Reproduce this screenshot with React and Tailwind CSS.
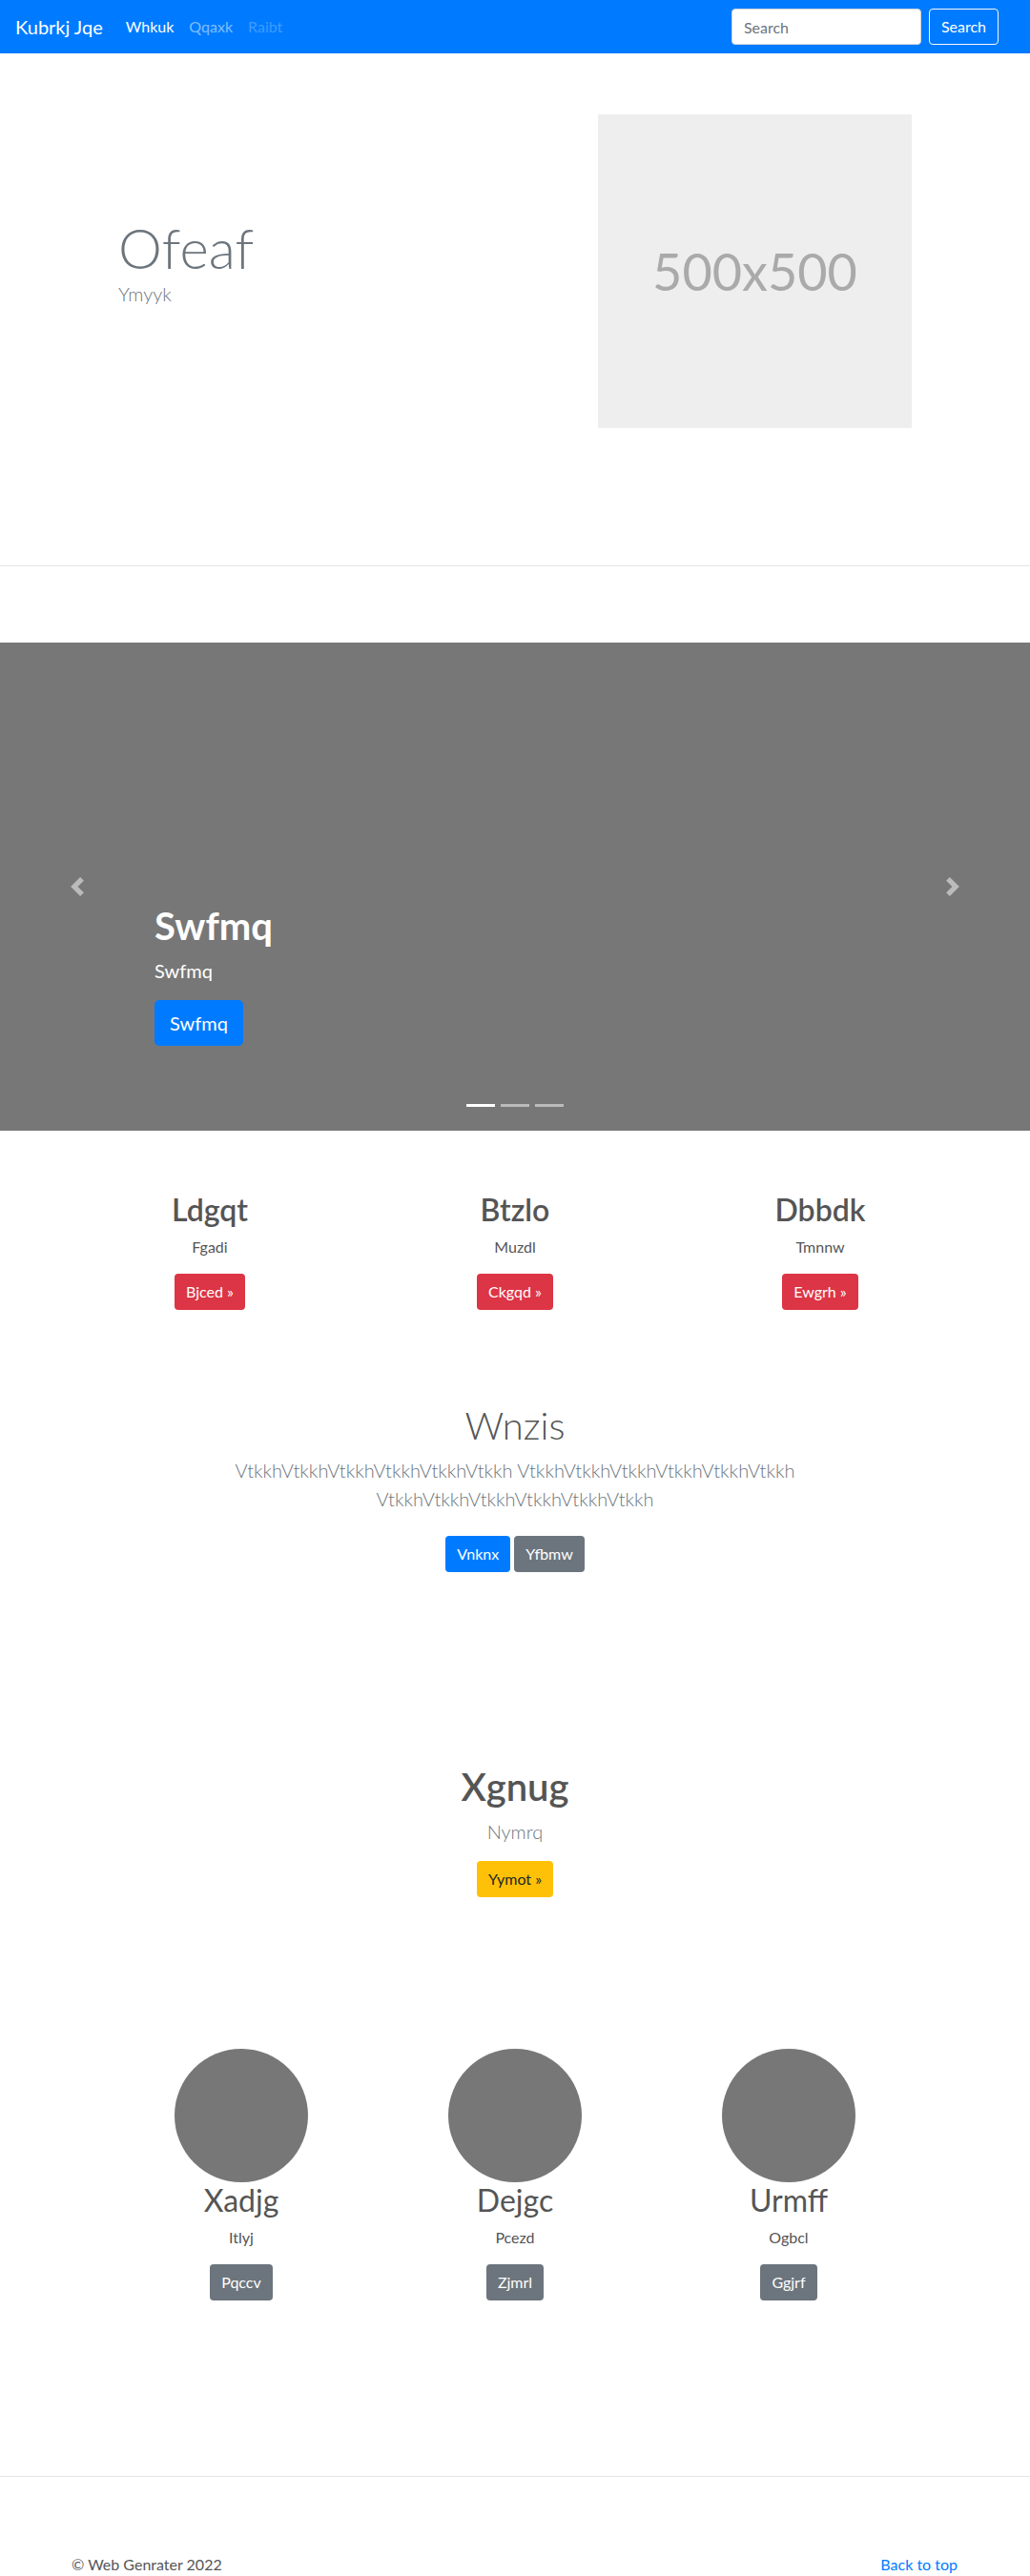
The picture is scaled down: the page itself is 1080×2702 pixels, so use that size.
import React from "react";

const F = "font-['Lato','Noto_Sans',sans-serif]";

function Btn({ className = "", children }) {
  return (
    <a
      className={
        "inline-flex items-center justify-center h-[38px] px-3 rounded-[4px] text-[16px] leading-[24px] " +
        className
      }
    >
      {children}
    </a>
  );
}

export default function App() {
  const vt = "VtkkhVtkkhVtkkhVtkkhVtkkhVtkkh";
  return (
    <div className={"w-[1080px] min-h-[2702px] bg-white text-[#555555] " + F}>
      {/* Navbar */}
      <nav className="h-[56px] bg-[#007bff] flex items-center pl-4 pr-[33px]">
        <span className="text-white text-[20px] leading-[30px] mr-4">Kubrkj Jqe</span>
        <a className="px-2 text-white text-[16px]">Whkuk</a>
        <a className="px-2 text-white/50 text-[16px]">Qqaxk</a>
        <a className="px-2 text-white/25 text-[16px]">Raibt</a>
        <div className="ml-auto flex items-center">
          <input
            placeholder="Search"
            className="w-[199px] h-[38px] rounded-[4px] border border-[#ced4da] bg-white px-3 text-[16px] text-[#495057] placeholder:text-[#6c757d] mr-2 outline-none"
          />
          <button className="h-[38px] px-3 rounded-[4px] border border-[#f8f9fa] text-white text-[16px]">
            Search
          </button>
        </div>
      </nav>

      {/* Hero */}
      <section className="flex h-[537px] pt-[64px]">
        <div className="w-[627px] h-[329px] pl-[124px] flex flex-col justify-center">
          <h1 className="text-[58px] font-light leading-none text-[#6c757d] mb-1">Ofeaf</h1>
          <p className="text-[20px] font-light leading-[30px] text-[#6c757d] mb-4">Ymyyk</p>
        </div>
        <div className="w-[329px] h-[329px] bg-[#eeeeee] flex items-center justify-center text-[#aaaaaa] text-[54px]">
          500x500
        </div>
      </section>
      <div className="h-px bg-[#e5e5e5]" />

      {/* Carousel */}
      <div className="relative mt-[80px] h-[512px] bg-[#777777] overflow-hidden">
        <div className="absolute left-0 top-0 bottom-0 w-[15%] flex items-center justify-center opacity-50">
          <svg width="20" height="20" viewBox="0 0 8 8" fill="#ffffff">
            <path d="M5.25 0l-4 4 4 4 1.5-1.5L4.25 4l2.5-2.5L5.25 0z" />
          </svg>
        </div>
        <div className="absolute right-0 top-0 bottom-0 w-[15%] flex items-center justify-center opacity-50">
          <svg width="20" height="20" viewBox="0 0 8 8" fill="#ffffff">
            <path d="M2.75 0l-1.5 1.5L3.75 4l-2.5 2.5L2.75 8l4-4-4-4z" />
          </svg>
        </div>
        <div className="absolute left-[162px] bottom-[89px] flex flex-col items-start text-white">
          <h1 className="text-[40px] font-bold leading-[48px] mb-2">Swfmq</h1>
          <p className="text-[20px] leading-[30px] mb-4">Swfmq</p>
          <a className="inline-flex items-center h-[48px] px-4 bg-[#007bff] rounded-[5px] text-[20px] text-white">
            Swfmq
          </a>
        </div>
        <div className="absolute bottom-[25px] left-0 right-0 flex justify-center gap-[6px]">
          <span className="w-[30px] h-[3px] bg-white" />
          <span className="w-[30px] h-[3px] bg-white/50" />
          <span className="w-[30px] h-[3px] bg-white/50" />
        </div>
      </div>

      {/* Marketing three columns */}
      <div className="w-[960px] mx-auto grid grid-cols-3 pt-[64px] text-center">
        {[
          ["Ldgqt", "Fgadi", "Bjced »"],
          ["Btzlo", "Muzdl", "Ckgqd »"],
          ["Dbbdk", "Tmnnw", "Ewgrh »"],
        ].map(([h, p, b]) => (
          <div key={h} className="flex flex-col items-center">
            <h2 className="text-[32px] font-semibold leading-[38px] mb-2 text-[#555555]">{h}</h2>
            <p className="text-[16px] leading-[24px] mb-4">{p}</p>
            <Btn className="bg-[#dc3545] text-white">{b}</Btn>
          </div>
        ))}
      </div>

      {/* Jumbotron */}
      <section className="mt-[97px] text-center flex flex-col items-center">
        <h1 className="text-[40px] font-light leading-[48px] mb-2 text-[#555555]">Wnzis</h1>
        <p className="text-[20px] font-light leading-[30px] text-[#6c757d] w-[640px] mb-4">
          {vt} {vt} {vt}
        </p>
        <div className="mt-2 flex justify-center gap-1">
          <Btn className="bg-[#007bff] text-white">Vnknx</Btn>
          <Btn className="bg-[#6c757d] text-white">Yfbmw</Btn>
        </div>
      </section>

      {/* Featurette */}
      <section className="mt-[201px] text-center flex flex-col items-center">
        <h2 className="text-[40px] font-semibold leading-[48px] mb-2 text-[#555555]">Xgnug</h2>
        <p className="text-[20px] font-light leading-[30px] text-[#6c757d] mb-4">Nymrq</p>
        <Btn className="bg-[#ffc107] text-[#212529]">Yymot »</Btn>
      </section>

      {/* Circles */}
      <div className="mt-[159px] w-[861px] mx-auto grid grid-cols-3 text-center">
        {[
          ["Xadjg", "Itlyj", "Pqccv"],
          ["Dejgc", "Pcezd", "Zjmrl"],
          ["Urmff", "Ogbcl", "Ggjrf"],
        ].map(([h, p, b]) => (
          <div key={h} className="flex flex-col items-center">
            <div className="w-[140px] h-[140px] rounded-full bg-[#777777]" />
            <h2 className="text-[32px] font-normal leading-[38px] mb-2 text-[#555555]">{h}</h2>
            <p className="text-[16px] leading-[24px] mb-4">{p}</p>
            <Btn className="bg-[#6c757d] text-white">{b}</Btn>
          </div>
        ))}
      </div>

      {/* Footer */}
      <div className="mt-[184px] h-px bg-[#e5e5e5]" />
      <footer className="pt-[80px] pl-[75px] pr-[76px] flex justify-between text-[16px] leading-[24px]">
        <p className="text-[#555555]">© Web Genrater 2022</p>
        <a className="text-[#007bff]">Back to top</a>
      </footer>
    </div>
  );
}
